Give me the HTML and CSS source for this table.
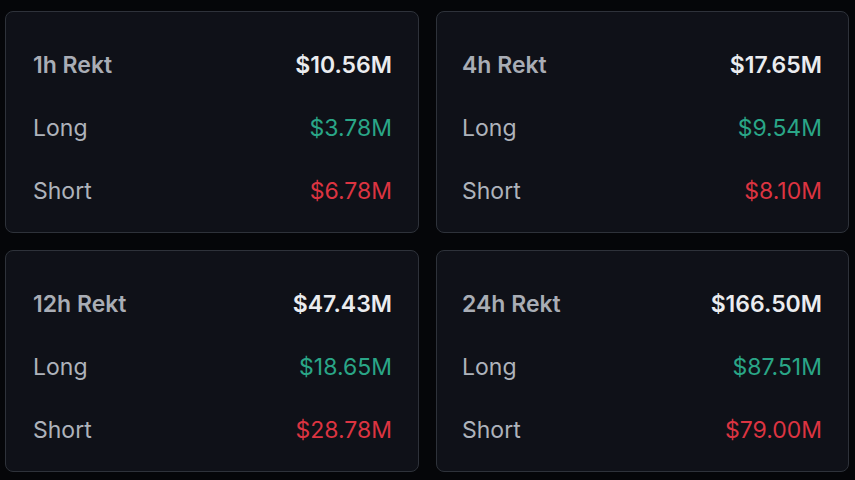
FILE: index.html
```html
<!DOCTYPE html>
<html>
<head>
<meta charset="utf-8">
<link rel="stylesheet" href="styles.css">
</head>
<body>
<div class="grid">
  <div class="card">
    <div class="row head"><span class="label">1h Rekt</span><span class="total">$10.56M</span></div>
    <div class="row"><span class="label">Long</span><span class="long">$3.78M</span></div>
    <div class="row"><span class="label">Short</span><span class="short">$6.78M</span></div>
  </div>
  <div class="card">
    <div class="row head"><span class="label">4h Rekt</span><span class="total">$17.65M</span></div>
    <div class="row"><span class="label">Long</span><span class="long">$9.54M</span></div>
    <div class="row"><span class="label">Short</span><span class="short">$8.10M</span></div>
  </div>
  <div class="card">
    <div class="row head"><span class="label">12h Rekt</span><span class="total">$47.43M</span></div>
    <div class="row"><span class="label">Long</span><span class="long">$18.65M</span></div>
    <div class="row"><span class="label">Short</span><span class="short">$28.78M</span></div>
  </div>
  <div class="card">
    <div class="row head"><span class="label">24h Rekt</span><span class="total">$166.50M</span></div>
    <div class="row"><span class="label">Long</span><span class="long">$87.51M</span></div>
    <div class="row"><span class="label">Short</span><span class="short">$79.00M</span></div>
  </div>
</div>
</body>
</html>
```
FILE: styles.css
```css
html, body {
  margin: 0;
  background: #050609;
  height: 480px;
  overflow: hidden;
}
body {
  font-family: "Inter", "Noto Sans", sans-serif;
}
.grid {
  box-sizing: border-box;
  height: 480px;
  padding: 11px 6px 8px 5px;
  display: grid;
  grid-template-columns: 414px 413px;
  grid-template-rows: 1fr 1fr;
  column-gap: 17px;
  row-gap: 17px;
}
.card {
  background: #0f1118;
  border: 1px solid #2e323a;
  border-radius: 8px;
  padding: 38px 26px 26px 27px;
  display: flex;
  flex-direction: column;
  justify-content: space-between;
}
.card:nth-child(2n) {
  padding-left: 25px;
}
.row {
  display: flex;
  justify-content: space-between;
  align-items: center;
  font-size: 23px;
  line-height: 30px;
}
.label {
  color: #aeb3bb;
  font-weight: 400;
}
.head .label {
  font-weight: 600;
  color: #a9adb5;
}
.total {
  color: #eaecef;
  font-weight: 600;
}
.long {
  color: #2aa687;
}
.short {
  color: #dc3441;
}
```
